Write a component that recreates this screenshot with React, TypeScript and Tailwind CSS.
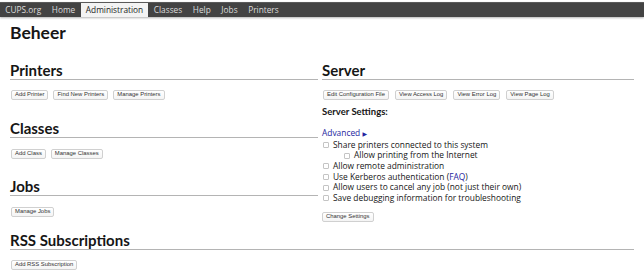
import React from "react";

const body = { fontFamily: '"Open Sans", "DejaVu Sans", sans-serif' };

function Btn({ children }: { children: React.ReactNode }) {
  return (
    <span className="inline-flex h-[10px] items-center rounded-[2px] border border-[#d0d0d0] bg-gradient-to-b from-white to-[#f4f4f4] px-[3px] font-['Liberation_Sans',sans-serif] text-[5.9px] leading-none text-[#333]">
      {children}
    </span>
  );
}

function H2({ children }: { children: React.ReactNode }) {
  return (
    <h2 className="border-b border-[#b4b4b4] pb-[1px] font-['Lato',sans-serif] text-[15px] font-bold leading-[15px] text-[#161616]">
      {children}
    </h2>
  );
}

function Check({ children, indent }: { children: React.ReactNode; indent?: boolean }) {
  return (
    <div className={`flex h-[10.7px] items-center ${indent ? "pl-[22px]" : "pl-[1px]"}`}>
      <span className="mr-[4px] h-[6px] w-[6px] rounded-[1px] border border-[#c4c4c4] bg-white" />
      <span>{children}</span>
    </div>
  );
}

export default function App() {
  const nav = ["CUPS.org", "Home", "Administration", "Classes", "Help", "Jobs", "Printers"];
  return (
    <div className="h-[274px] w-[644px] overflow-hidden bg-white text-[#161616]" style={body}>
      <div className="mt-[2px] flex h-[15px] items-stretch border-t border-[#5a5a5a] bg-[#434343] shadow-[0_1px_2px_rgba(0,0,0,0.3)]">
        {nav.map((n) => (
          <span
            key={n}
            className={`flex items-center px-[5.3px] text-[8.3px] leading-none ${
              n === "Administration" ? "bg-[#f3f3f3] text-[#222]" : "text-[#dddddd]"
            }`}
          >
            {n}
          </span>
        ))}
      </div>
      <div className="px-[10px]">
        <h1 className="mt-[6px] font-['Lato',sans-serif] text-[17.5px] font-bold leading-[20px]">Beheer</h1>
        <div className="mt-[20px] grid grid-cols-[308px_312px] gap-x-[4px]">
          <div>
            <H2>Printers</H2>
            <div className="mt-[10px] flex gap-[5px] pl-[1px]">
              <Btn>Add Printer</Btn>
              <Btn>Find New Printers</Btn>
              <Btn>Manage Printers</Btn>
            </div>
            <div className="mt-[21px]">
              <H2>Classes</H2>
            </div>
            <div className="mt-[11px] flex gap-[5px] pl-[1px]">
              <Btn>Add Class</Btn>
              <Btn>Manage Classes</Btn>
            </div>
            <div className="mt-[20px]">
              <H2>Jobs</H2>
            </div>
            <div className="mt-[11px] flex gap-[5px] pl-[1px]">
              <Btn>Manage Jobs</Btn>
            </div>
          </div>
          <div>
            <H2>Server</H2>
            <div className="mt-[10px] flex gap-[6px] pl-[1px]">
              <Btn>Edit Configuration File</Btn>
              <Btn>View Access Log</Btn>
              <Btn>View Error Log</Btn>
              <Btn>View Page Log</Btn>
            </div>
            <div className="mt-[6px] font-['Lato',sans-serif] text-[9.5px] font-bold leading-[12px]">
              Server Settings:
            </div>
            <div className="mt-[10px] text-[8.4px] leading-[10.7px]">
              <div className="text-[#2424a0]">
                Advanced <span className="text-[6px]">▶</span>
              </div>
              <Check>Share printers connected to this system</Check>
              <Check indent>Allow printing from the Internet</Check>
              <Check>Allow remote administration</Check>
              <Check>
                Use Kerberos authentication (<span className="text-[#2424a0]">FAQ</span>)
              </Check>
              <Check>Allow users to cancel any job (not just their own)</Check>
              <Check>Save debugging information for troubleshooting</Check>
            </div>
            <div className="mt-[8px] flex">
              <Btn>Change Settings</Btn>
            </div>
          </div>
        </div>
        <div className="mt-[11px]">
          <H2>RSS Subscriptions</H2>
        </div>
        <div className="mt-[10px] flex pl-[1px]">
          <Btn>Add RSS Subscription</Btn>
        </div>
      </div>
    </div>
  );
}
